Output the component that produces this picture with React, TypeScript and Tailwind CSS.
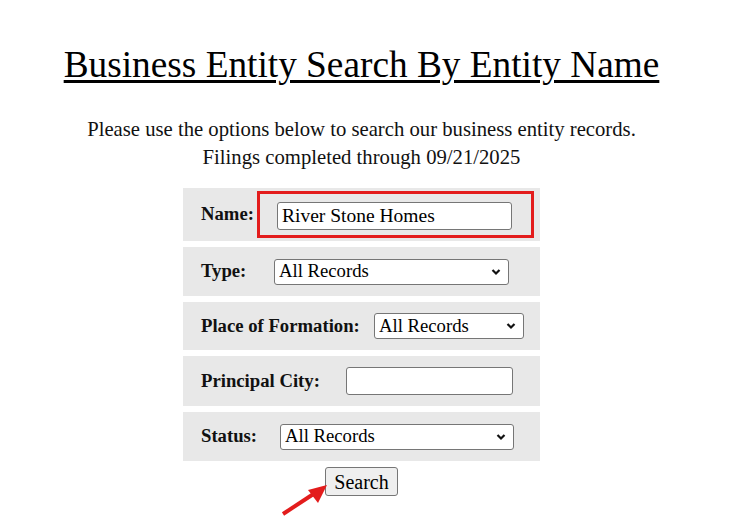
import React from "react";

function Chevron() {
  return (
    <svg
      width="10"
      height="7"
      viewBox="0 0 10 7"
      className="pointer-events-none absolute right-[8px] top-1/2 -translate-y-1/2"
    >
      <path d="M1.5 1.5L5 5L8.5 1.5" fill="none" stroke="#111" strokeWidth="2.2" />
    </svg>
  );
}

function SelectBox({ className }: { className: string }) {
  return (
    <div className={`relative ${className}`}>
      <select
        defaultValue="all"
        className="h-full w-full appearance-none rounded-[3px] border border-[#767676] bg-white pl-[4px] text-[18.7px] leading-none text-black outline-none"
      >
        <option value="all">All Records</option>
      </select>
      <Chevron />
    </div>
  );
}

function Label({ children, className }: { children: React.ReactNode; className: string }) {
  return <div className={`shrink-0 pl-[18px] text-[18.7px] font-bold text-[#111] ${className}`}>{children}</div>;
}

function Row({ children, className }: { children: React.ReactNode; className: string }) {
  return <div className={`flex items-center bg-[#e8e8e8] ${className}`}>{children}</div>;
}

export default function App() {
  return (
    <div className="relative min-h-[528px] w-[732px] bg-white font-['Liberation_Serif',serif] text-black">
      <div className="flex w-[723px] flex-col items-center pt-[44px]">
        <h1 className="text-[37.3px] leading-[41px] underline decoration-[3px] underline-offset-[3px]">
          Business Entity Search By Entity Name
        </h1>

        <div className="mt-[30px] text-center text-[20.7px] leading-[28px] text-[#111]">
          <p>Please use the options below to search our business entity records.</p>
          <p>Filings completed through 09/21/2025</p>
        </div>

        <div className="mt-[17px] flex w-[357px] flex-col gap-[6px]">
          <Row className="h-[53px]">
            <Label className="w-[74px]">Name:</Label>
            <div className="flex h-[47px] w-[277px] items-center border-[3px] border-[#e31c1c] pl-[17px]">
              <input
                defaultValue="River Stone Homes"
                className="mt-[3px] h-[28px] w-[235px] rounded-[3px] border border-[#767676] bg-white pl-[4px] text-[19.5px] text-black outline-none"
              />
            </div>
          </Row>

          <Row className="h-[49px]">
            <Label className="w-[91px]">Type:</Label>
            <SelectBox className="h-[26px] w-[235px]" />
          </Row>

          <Row className="h-[48px]">
            <Label className="w-[191px]">Place of Formation:</Label>
            <SelectBox className="h-[26px] w-[150px]" />
          </Row>

          <Row className="h-[50px]">
            <Label className="w-[163px]">Principal City:</Label>
            <input className="h-[28px] w-[167px] rounded-[3px] border border-[#767676] bg-white pl-[4px] text-[19px] outline-none" />
          </Row>

          <Row className="h-[49px]">
            <Label className="w-[97px]">Status:</Label>
            <SelectBox className="h-[26px] w-[234px]" />
          </Row>
        </div>

        <button className="mt-[6px] h-[29px] w-[73px] rounded-[3px] border border-[#767676] bg-[#efefef] text-[20px] leading-none text-black">
          Search
        </button>
      </div>

      <svg width="60" height="45" viewBox="0 0 60 45" className="absolute left-[278px] top-[478px]">
        <line x1="5" y1="36" x2="37" y2="15" stroke="#e31c1c" strokeWidth="4" />
        <polygon points="49,7 30,12 40,25" fill="#e31c1c" />
      </svg>
    </div>
  );
}
